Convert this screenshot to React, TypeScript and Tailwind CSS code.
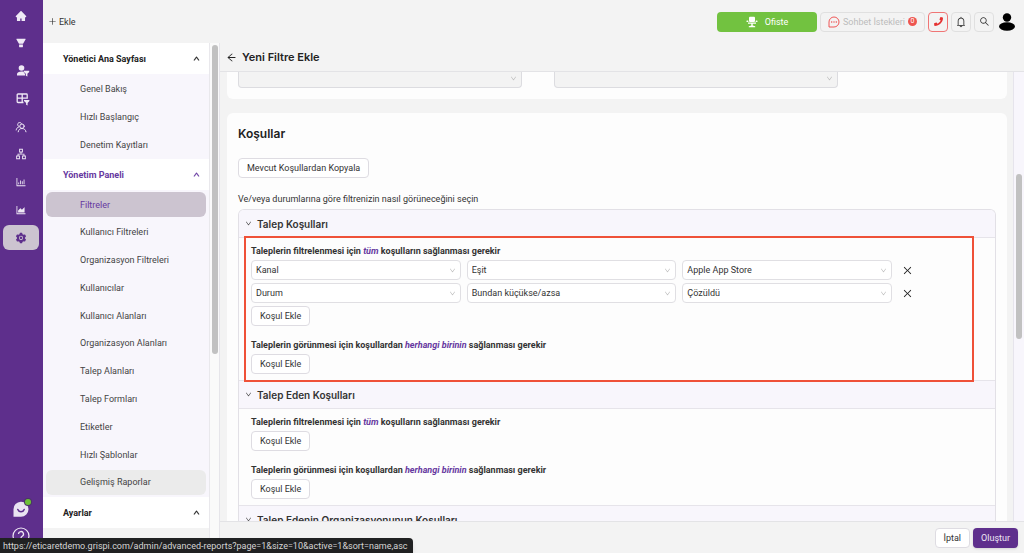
import React from "react";
import {
  AiFillFilter,
  AiFillHome,
  AiFillSetting,
  AiOutlineApartment,
  AiOutlineAreaChart,
  AiOutlineArrowLeft,
  AiOutlineBarChart,
  AiOutlineBell,
  AiOutlineClose,
  AiOutlineDown,
  AiOutlinePlus,
  AiOutlineSearch,
  AiOutlineUp,
} from "react-icons/ai";
import { FaPhone } from "react-icons/fa";

// 1. Custom icons
const UserFilterIcon = () => (
  <svg viewBox="0 0 14 14" className="h-[14px] w-[14px] translate-x-[2px]" fill="currentColor">
    <circle cx="5.5" cy="4" r="2.8" />
    <path d="M1 11.5V10c0-1.600 2-2.500 4.500-2.500 1 0 1.500 .1 2 .3l1.500 2.200v1.500z" />
    <path d="M7.800 6.800h5.400v1.100l-1.800 1.900v2.700l-1.600-.8V9.800L7.800 7.900z" />
  </svg>
);

const TableFilterIcon = () => (
  <svg viewBox="0 0 14 14" className="h-[14px] w-[14px] translate-x-[2px]">
    <path
      d="M7.500 10.500H2a.8.8 0 0 1-.8-.8V2.800A.8.8 0 0 1 2 2h8.400a.8.8 0 0 1 .8.8v4M1.200 6.200h10M6.200 2v8.500"
      fill="none"
      stroke="currentColor"
      strokeWidth="1.300"
    />
    <path d="M8 8h5.400v1l-1.800 1.900v2.700l-1.500-.8v-1.900L8 9z" fill="currentColor" />
  </svg>
);

const PeopleIcon = () => (
  <svg
    viewBox="0 0 12 12"
    className="h-3 w-3"
    fill="none"
    stroke="currentColor"
    strokeWidth="1"
    strokeLinecap="round"
  >
    <circle cx="7" cy="5.200" r="2.200" />
    <path d="M3.200 10.800c.3-2 1.600-3.300 3.800-3.300s3.700 1.300 4 3.300" />
    <path d="M4.200 5.600A2.100 2.100 0 1 1 6.400 2.300M1.200 9c.2-1.500 1-2.500 2.400-3" />
  </svg>
);

const ChatBubbleIcon = () => (
  <svg viewBox="0 0 20 20" className="h-5 w-5">
    <path d="M2.500 17.500V10.500a7.500 7.500 0 1 1 7.500 7.200H2.500z" fill="#e9e3f2" />
    <path
      d="M6.800 10.500a3.400 3.400 0 0 0 6.400 0"
      fill="none"
      stroke="#5c2d8c"
      strokeWidth="1.500"
      strokeLinecap="round"
    />
  </svg>
);

const ChairIcon = () => (
  <svg viewBox="0 0 12 12" className="h-3 w-3" fill="currentColor">
    <rect x="3" y="0.800" width="6" height="5.200" rx="1" />
    <rect x="0.500" y="4.500" width="1.900" height="1.500" rx="0.500" />
    <rect x="9.600" y="4.500" width="1.900" height="1.500" rx="0.500" />
    <path d="M2 6.500h8v1.200H6.700v1.700l2.500.9v.9H2.800v-.9l2.500-.9V7.700H2z" />
  </svg>
);

const ChatDotsIcon = () => (
  <svg viewBox="0 0 12 12" className="h-3 w-3 text-[#ee4545]">
    <path d="M1 11V6a5 5 0 1 1 5 5z" fill="none" stroke="currentColor" strokeWidth="0.900" />
    <circle cx="3.700" cy="6" r="0.700" fill="currentColor" />
    <circle cx="6" cy="6" r="0.700" fill="currentColor" />
    <circle cx="8.300" cy="6" r="0.700" fill="currentColor" />
  </svg>
);

const AvatarIcon = () => (
  <svg viewBox="0 0 16 18" className="h-[18px] w-4" fill="#000">
    <circle cx="8" cy="4.500" r="4.200" />
    <ellipse cx="8" cy="13.500" rx="8" ry="4.200" />
  </svg>
);

// 2. Menu data
const railItems = [
  { label: "Ana Sayfa", icon: <AiFillHome size={12} /> },
  { label: "Filtreler", icon: <AiFillFilter size={12} /> },
  { label: "Kullanıcı Filtreleri", icon: <UserFilterIcon /> },
  { label: "Tablo Filtreleri", icon: <TableFilterIcon /> },
  { label: "Kullanıcılar", icon: <PeopleIcon /> },
  { label: "Organizasyonlar", icon: <AiOutlineApartment size={12} /> },
  { label: "Raporlar", icon: <AiOutlineBarChart size={12} /> },
  { label: "Analiz", icon: <AiOutlineAreaChart size={12} /> },
  { label: "Ayarlar", icon: <AiFillSetting size={12} />, active: true },
];

const homeItems = ["Genel Bakış", "Hızlı Başlangıç", "Denetim Kayıtları"];

const panelItems = [
  "Filtreler",
  "Kullanıcı Filtreleri",
  "Organizasyon Filtreleri",
  "Kullanıcılar",
  "Kullanıcı Alanları",
  "Organizasyon Alanları",
  "Talep Alanları",
  "Talep Formları",
  "Etiketler",
  "Hızlı Şablonlar",
  "Gelişmiş Raporlar",
];

const conditions = [
  ["Kanal", "Eşit", "Apple App Store"],
  ["Durum", "Bundan küçükse/azsa", "Çözüldü"],
];

// 3. Small building blocks
const MenuHeader = ({ title, active }: { title: string; active?: boolean }) => (
  <button
    className={`flex h-[31px] w-full shrink-0 items-center justify-between bg-white pr-[9px] pl-5 font-bold ${
      active ? "text-[#6638a0]" : "text-[#222]"
    }`}
  >
    {title}
    <AiOutlineUp size={7} strokeWidth={80} stroke="currentColor" />
  </button>
);

const MenuLink = ({ title }: { title: string }) => {
  let state = "text-[#444]";
  if (title === "Filtreler") state = "bg-[#ccc4d0] text-[#6638a0]";
  if (title === "Gelişmiş Raporlar") state = "bg-[#ebebeb] text-[#444]";

  return (
    <a href="#" className={`mx-[3px] flex h-[25px] items-center rounded-md pl-[34px] ${state}`}>
      {title}
    </a>
  );
};

const PlainButton = ({ children }: { children: React.ReactNode }) => (
  <button className="flex h-5 items-center rounded border border-[#dedce2] bg-white px-2 text-[#333]">
    {children}
  </button>
);

const SelectBox = ({ label, value }: { label: string; value: string }) => (
  <div className="relative flex-1">
    <select
      aria-label={label}
      className="block h-5 w-full appearance-none rounded border border-[#e0dfe3] bg-white px-1 text-[#333]"
    >
      <option>{value}</option>
    </select>
    <AiOutlineDown size={7} className="pointer-events-none absolute top-[7px] right-[5px] text-[#b5b5b5]" />
  </div>
);

const DisabledSelect = ({ label }: { label: string }) => (
  <div className="relative w-[284px]">
    <select
      aria-label={label}
      disabled
      className="block h-4 w-full appearance-none rounded-b border border-t-0 border-[#dcdce0] bg-[#f3f3f3]"
    />
    <AiOutlineDown size={7} className="pointer-events-none absolute top-[3px] right-[5px] text-[#b5b5b5]" />
  </div>
);

const SectionHeader = ({ title }: { title: string }) => (
  <button className="flex h-[28px] w-full items-center gap-[5px] border-b border-[#e6e4ea] bg-[#f8f6fc] pl-[6px] font-['Inter','Liberation_Sans',sans-serif] text-[10px] font-semibold text-[#333]">
    <AiOutlineDown size={7} />
    {title}
  </button>
);

const Section = ({ title, rows }: { title: string; rows: string[][] }) => (
  <section className="border-b border-[#e6e4ea]">
    <SectionHeader title={title} />
    <div className="flex flex-col px-3 py-[6px]">
      <p className="mb-[2px] font-bold text-[#333]">
        Taleplerin filtrelenmesi için <em className="text-[#6638a0]">tüm</em> koşulların sağlanması gerekir
      </p>
      <div className="flex flex-col items-start gap-[3px]">
        {rows.map((row) => (
          <div key={row[0]} className="mr-[70px] flex items-center self-stretch">
            <div className="flex flex-1 gap-[6px]">
              <SelectBox label="Alan" value={row[0]} />
              <SelectBox label="Operatör" value={row[1]} />
              <SelectBox label="Değer" value={row[2]} />
            </div>
            <button aria-label="Koşulu sil" className="ml-[10px] text-[#222]">
              <AiOutlineClose size={11} />
            </button>
          </div>
        ))}
        <PlainButton>Koşul Ekle</PlainButton>
      </div>
      <p className="mt-3 mb-[2px] font-bold text-[#333]">
        Taleplerin görünmesi için koşullardan <em className="text-[#6638a0]">herhangi birinin</em> sağlanması
        gerekir
      </p>
      <div className="flex">
        <PlainButton>Koşul Ekle</PlainButton>
      </div>
    </div>
  </section>
);

// 4. Page regions
const Rail = () => (
  <nav className="flex w-[43px] shrink-0 flex-col bg-[#5e2f8c] px-[3px] pt-[3px] text-[#efe9f5]">
    <div className="flex h-[247px] shrink-0 flex-col justify-between">
      {railItems.map((item) => (
        <button
          key={item.label}
          aria-label={item.label}
          className={`flex h-[25px] w-9 items-center justify-center rounded-md ${
            item.active ? "bg-[#ccc4d0] text-[#5e2f8c]" : ""
          }`}
        >
          {item.icon}
        </button>
      ))}
    </div>
    <div className="mt-auto flex h-[56px] w-9 shrink-0 flex-col items-center gap-2 overflow-hidden">
      <button aria-label="Sohbet" className="relative mt-[2px]">
        <ChatBubbleIcon />
        <span className="absolute top-0 right-0 h-[6px] w-[6px] rounded-full bg-[#6cc136] ring-1 ring-[#4b3565]" />
      </button>
      <button aria-label="Yardım">
        <svg viewBox="0 0 18 18" className="h-[18px] w-[18px]" fill="none" stroke="currentColor">
          <circle cx="9" cy="9" r="8" strokeWidth="1.200" />
          <path d="M6.500 7a2.500 2.500 0 1 1 3.700 2.200c-.8.500-1.200.9-1.200 1.800M9 12.500v1.200" strokeWidth="1.300" />
        </svg>
      </button>
    </div>
  </nav>
);

const TopBar = () => (
  <header className="flex h-[43px] shrink-0 items-center gap-[3px] pr-[9px] pl-[5px]">
    <button className="mr-auto flex items-center gap-[2px] text-[#333]">
      <AiOutlinePlus size={9} />
      Ekle
    </button>
    <button className="flex h-5 w-[100px] items-center justify-center gap-[7px] rounded bg-[#72c240] text-white">
      <ChairIcon />
      Ofiste
    </button>
    <button
      disabled
      className="flex h-5 items-center gap-[3px] rounded border border-[#e0e0e0] px-[7px] text-[#bcbcbc]"
    >
      <ChatDotsIcon />
      Sohbet İstekleri
      <span className="flex h-[9px] w-[9px] items-center justify-center rounded-full bg-[#ee5550] text-[7px] leading-[9px] text-white">
        0
      </span>
    </button>
    <button
      aria-label="Telefon"
      className="flex h-5 w-5 items-center justify-center rounded border border-[#f07575] text-[#e53232]"
    >
      <FaPhone size={9} />
    </button>
    <button
      aria-label="Bildirimler"
      className="flex h-5 w-5 items-center justify-center rounded border border-[#e0e0e0] text-[#333]"
    >
      <AiOutlineBell size={12} />
    </button>
    <button
      aria-label="Ara"
      className="flex h-5 w-5 items-center justify-center rounded border border-[#e0e0e0] text-[#333]"
    >
      <AiOutlineSearch size={11} />
    </button>
    <button aria-label="Profil" className="ml-[2px]">
      <AvatarIcon />
    </button>
  </header>
);

const SideMenu = () => (
  <aside className="flex w-[177px] shrink-0 border-r border-[#e6e5ea]">
    <div className="flex w-[166px] flex-col overflow-hidden">
      <MenuHeader title="Yönetici Ana Sayfası" />
      <div className="flex h-[85px] shrink-0 flex-col justify-between bg-[#f8f6fc] py-[2px]">
        {homeItems.map((item) => (
          <MenuLink key={item} title={item} />
        ))}
      </div>
      <MenuHeader title="Yönetim Paneli" active />
      <div className="flex h-[307px] shrink-0 flex-col justify-between bg-[#f8f6fc] py-[2px]">
        {panelItems.map((item) => (
          <MenuLink key={item} title={item} />
        ))}
      </div>
      <MenuHeader title="Ayarlar" />
    </div>
    <div className="flex flex-1 justify-center border-l border-[#e9e8ec] bg-[#fafafa] pt-[2px]">
      <div className="h-[309px] w-[6px] rounded-full bg-[#c1c1c1]" />
    </div>
  </aside>
);

const FilterForm = () => (
  <div className="flex min-h-0 flex-1">
    <div className="min-w-0 flex-1 overflow-hidden pr-[6px] pl-[7px]">
      <div className="flex gap-8 rounded-b-md bg-[#fdfdfd] px-[11px] pb-[11px]">
        <DisabledSelect label="Görünürlük" />
        <DisabledSelect label="Grup" />
      </div>
      <div className="mt-[14px] rounded-t-md bg-[#fdfdfd] px-[11px] pt-3">
        <h2 className="font-['Inter','Liberation_Sans',sans-serif] text-[12px] leading-[18px] font-semibold text-[#222]">
          Koşullar
        </h2>
        <div className="mt-[15px] flex">
          <PlainButton>Mevcut Koşullardan Kopyala</PlainButton>
        </div>
        <p className="mt-[14px] mb-[3px] text-[#333]">
          Ve/veya durumlarına göre filtrenizin nasıl görüneceğini seçin
        </p>
        <div className="relative">
          <div className="overflow-hidden rounded-t-md border border-b-0 border-[#e2e0e6]">
            <Section title="Talep Koşulları" rows={conditions} />
            <Section title="Talep Eden Koşulları" rows={[]} />
            <SectionHeader title="Talep Edenin Organizasyonunun Koşulları" />
          </div>
          <div className="pointer-events-none absolute top-[27px] right-[22px] left-[6px] h-[146px] border-2 border-[#ef5138]" />
        </div>
      </div>
    </div>
    <div className="flex w-[11px] shrink-0 justify-center border-l border-[#e6e4ec] bg-[#f8f6fc] pt-[102px]">
      <div className="h-[165px] w-[6px] rounded-full bg-[#c1c1c1]" />
    </div>
  </div>
);

// 5. App
export default function App() {
  return (
    <div className="relative flex h-screen overflow-hidden bg-[#f3f3f3] font-['Roboto','Inter','Liberation_Sans',sans-serif] text-[9px] leading-[14px]">
      <Rail />
      <div className="flex min-w-0 flex-1 flex-col">
        <TopBar />
        <div className="flex min-h-0 flex-1">
          <SideMenu />
          <main className="flex min-w-0 flex-1 flex-col">
            <div className="flex h-[29px] shrink-0 items-center gap-[5px] border-b border-[#e3e3e6] pl-[6px] text-[#222]">
              <button aria-label="Geri">
                <AiOutlineArrowLeft size={11} />
              </button>
              <h1 className="font-['Inter','Liberation_Sans',sans-serif] text-[11px] font-semibold">
                Yeni Filtre Ekle
              </h1>
            </div>
            <FilterForm />
            <footer className="flex h-8 shrink-0 items-center justify-end gap-[3px] border-t border-[#e3e3e6] pr-[6px]">
              <PlainButton>İptal</PlainButton>
              <button className="flex h-5 items-center rounded bg-[#5e2f8c] px-2 text-[#eee8f5] shadow-sm">
                Oluştur
              </button>
            </footer>
          </main>
        </div>
      </div>
      <div className="absolute bottom-0 left-0 flex h-[15px] items-center rounded-tr bg-[#202122] pr-[6px] pl-[3px] whitespace-nowrap text-[#d5d5d5] shadow-md">
        https://eticaretdemo.grispi.com/admin/advanced-reports?page=1&amp;size=10&amp;active=1&amp;sort=name,asc
      </div>
    </div>
  );
}
